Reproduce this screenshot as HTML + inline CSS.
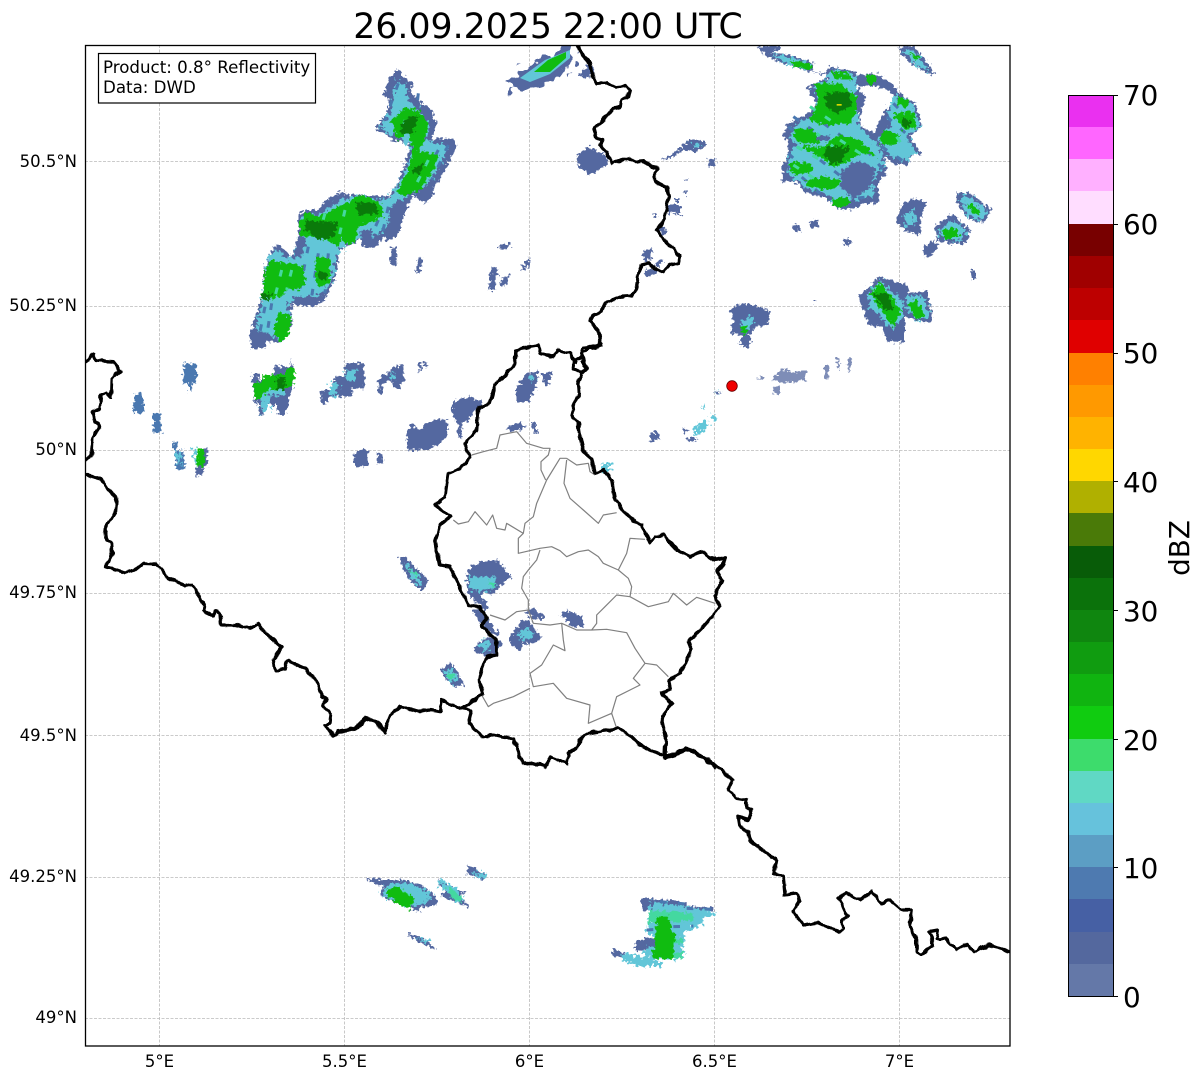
<!DOCTYPE html>
<html><head><meta charset="utf-8"><style>
html,body{margin:0;padding:0;background:#fff}
svg{display:block}
text{font-family:"DejaVu Sans","Liberation Sans",sans-serif;fill:#000}
.b{fill:#5468a0;filter:url(#fz)}.m{fill:#4a78b0;filter:url(#fz)}.t{fill:#62c6d8;filter:url(#ft)}.l{fill:#44d8a0;filter:url(#fz)}.g{fill:#10bc10;filter:url(#fz)}.d{fill:#0a7a0a;filter:url(#fz)}
.c{fill:none;stroke:#000;stroke-width:10;stroke-linejoin:round;stroke-linecap:round;filter:url(#fb)}
.s{fill:none;stroke:#808080;stroke-width:3.6;stroke-linejoin:round}
.st{fill:none;stroke-width:9;stroke-dasharray:20 34}
.tx{font-size:16.5px}.ty{font-size:16.5px;text-anchor:end}.cb{font-size:27.8px}
</style></head><body>
<svg width="1202" height="1081" viewBox="0 0 1202 1081" xmlns="http://www.w3.org/2000/svg">
<defs>
<clipPath id="ax"><rect x="85" y="45" width="925" height="1001"/></clipPath>
<filter id="fz" x="-20%" y="-20%" width="140%" height="140%" color-interpolation-filters="sRGB"><feTurbulence type="fractalNoise" baseFrequency=".1" numOctaves="2" seed="3"/><feDisplacementMap in="SourceGraphic" scale="24" xChannelSelector="R" yChannelSelector="G"/></filter>
<filter id="ft" x="-20%" y="-20%" width="140%" height="140%" color-interpolation-filters="sRGB"><feTurbulence type="fractalNoise" baseFrequency=".09" numOctaves="2" seed="8"/><feDisplacementMap in="SourceGraphic" scale="40" xChannelSelector="R" yChannelSelector="G"/></filter>
<filter id="fb" x="-20%" y="-20%" width="140%" height="140%" color-interpolation-filters="sRGB"><feTurbulence type="fractalNoise" baseFrequency=".05" numOctaves="1" seed="5"/><feDisplacementMap in="SourceGraphic" scale="14" xChannelSelector="R" yChannelSelector="G"/></filter>
</defs>
<rect width="1202" height="1081" fill="#fff"/>
<text x="548" y="38" font-size="34.7" text-anchor="middle">26.09.2025 22:00 UTC</text>
<g stroke="#bbb" stroke-width=".8" stroke-dasharray="3 1.5" fill="none">
<path d="M159.5 45V1046M344.5 45V1046M529.5 45V1046M714.5 45V1046M899.5 45V1046"/>
<path d="M85 161.5H1010M85 306.5H1010M85 450.5H1010M85 593.5H1010M85 735.5H1010M85 877.5H1010M85 1018.5H1010"/>
</g>
<g clip-path="url(#ax)">
<!-- radar NW -->
<g transform="translate(85,40) scale(.33333)">
<path class="b" d="M940 88L965 120 985 130 975 155 1005 185 1040 210 1055 250 1040 300 1100 295 1118 315 1080 390 1045 445 1050 460 1020 492 985 465 960 520 935 590 905 605 900 590 870 625 830 620 825 585 815 610 770 620 760 650 750 720 715 785 680 800 630 795 620 790 620 860 590 905 545 905 540 925 500 925 495 880 510 830 530 780 530 770 540 680 560 635 575 610 620 650 640 590 640 530 660 510 700 510 720 485 765 455 800 465 860 465 910 470 940 425 960 375 975 310 925 300 870 265 905 220 915 185 895 165 915 110Z
M1240 620L1272 608 1275 618 1250 630ZM1305 690L1330 650 1335 665 1320 695ZM1220 680L1240 690 1230 750 1210 750ZM1250 715L1275 705 1260 740 1245 738ZM1000 655L1015 655 1005 700 990 695ZM920 620L935 625 935 675 915 675Z"/>
<path class="t" d="M935 120L965 140 965 170 1000 210 1030 250 1020 300 1090 320 1060 385 1020 440 960 470 920 500 905 560 870 590 830 590 790 610 755 640 740 730 700 770 630 770 610 790 610 860 585 900 555 880 510 870 530 800 535 770 550 650 570 630 620 655 650 590 650 530 700 525 750 480 810 470 900 480 930 450 960 400 985 330 950 300 885 265 920 210Z"/>
<path class="st" stroke="#4a78b0" d="M940 130L900 240M1000 160L985 300M670 620L640 770M700 640L680 770M730 640L720 760M540 800L520 900M560 790L545 890M880 540L850 610M910 500L890 590M1060 330L1000 440M1090 315L1040 420"/>
<path class="g" d="M960 205L1000 210 1030 250 1020 300 1000 330 1060 345 1050 385 1005 450 960 470 935 455 965 400 985 330 970 280 935 300 920 240Z
M830 465L890 490 895 530 820 560 810 610 780 610 770 590 760 620 700 590 650 590 640 555 660 515 700 530 760 500Z
M560 660L655 680 660 730 640 750 610 745 590 770 530 780 540 690ZM695 650L735 655 735 730 700 740 690 700ZM580 815L620 830 610 890 585 905 565 880Z"/>
<path class="st" stroke="#44d8a0" d="M780 510L760 600M720 520L700 590M590 690L570 770M620 690L605 750M960 240L945 290M1030 360L990 440"/>
<path class="d" d="M810 485L870 490 880 520 820 525ZM665 540L760 550 750 590 700 600 660 570ZM700 690L725 700 720 720 700 720ZM530 760L560 760 555 780 530 780ZM970 230L1000 230 985 280 950 285 945 260ZM980 385L1020 370 1000 410Z"/>
<path class="b" d="M900 590L925 500 945 480 955 520 935 590ZM830 570L860 570 855 620 830 620ZM640 590L665 600 650 650 625 650ZM630 770L680 780 675 800 630 795ZM500 880L545 880 540 925 500 925ZM1015 445L1050 450 1020 492 990 470ZM720 490L765 460 760 490 700 520Z"/>
</g>
<!-- top streak -->
<path class="b" d="M505 82L540 58 570 48 578 55 555 80 530 88 510 92Z"/>
<path fill="#62c6d8" d="M520 78L545 60 570 50 570 58 550 74 530 82Z"/>
<path fill="#10bc10" d="M534 72L548 60 566 52 566 58 550 72Z"/>
<!-- row + Lux area -->
<g transform="translate(85,340) scale(.33333)">
<path class="m" d="M295 70L335 72 335 130 320 130 320 155 312 155 312 130 295 130ZM148 160L172 160 177 220 145 220ZM205 220L225 220 230 278 205 278ZM265 305L275 305 275 332 295 332 300 385 275 390 268 340Z"/>
<path class="t" d="M268 335L285 335 290 385 278 360ZM323 325L335 325 335 380 328 370Z"/>
<path class="b" d="M335 375L355 375 355 405 332 410ZM355 322L365 322 370 375 355 378ZM500 102L520 102 520 120 565 120 565 80 590 80 617 80 617 58 622 80 628 130 612 170 612 195 600 222 580 222 575 195 535 195 535 225 525 225 520 180 510 198 505 150Z
M705 150L745 150 750 110 780 108 780 68 838 70 838 145 800 145 800 168 730 170 725 190 710 190Z"/>
<path class="t" d="M530 125L600 120 600 165 555 165 555 205 530 222 525 170ZM735 130L760 130 755 165 735 165ZM780 90L815 90 810 125 785 125Z"/>
<path class="g" d="M335 325L358 325 358 380 335 380ZM505 130L535 125 535 105 570 105 600 100 605 85 628 85 628 130 610 145 570 150 545 150 530 175 508 175Z"/>
<path class="d" d="M575 110L600 115 598 148 572 148Z"/>
</g>
<g transform="translate(340,340) scale(.33333)">
<path class="b" d="M115 115L150 95 160 78 190 78 192 120 180 145 160 145 155 125 130 130 125 165 115 160ZM235 65L245 65 242 95 237 95ZM250 68L262 68 262 80 250 80ZM335 190L360 175 390 170 425 185 425 210 395 215 385 245 365 245 365 295 355 290 350 240 337 230ZM200 285L215 250 240 270 265 245 320 235 325 285 300 310 260 330 205 332ZM40 345L70 325 85 335 85 375 45 385ZM110 335L125 340 130 370 112 370ZM525 150L560 100 595 92 590 135 565 185 530 185ZM605 100L635 95 628 135 615 140ZM495 265L540 245 560 262 520 275ZM575 245L585 245 592 285 585 285Z
M395 675L430 665 470 660 515 710 480 740 455 765 430 755 425 770 445 800 435 810 410 790 385 760 378 710Z
M395 805L420 810 480 885 470 890 430 865 400 820ZM400 925L430 895 460 890 485 910 465 945 430 945 410 940ZM505 900L545 840 570 845 605 895 580 910 550 910 540 935 520 920ZM550 815L580 805 615 830 605 840 570 830ZM660 825L680 812 720 825 735 860 700 860ZM925 285L955 272 960 295 935 305ZM1025 265L1040 265 1045 275 1030 278ZM1035 295L1075 295 1055 308ZM180 655L195 650 225 680 265 725 250 750 230 745 190 690ZM300 990L330 968 345 985 375 1035 345 1040 320 1020Z"/>
<path class="t" d="M150 100L170 100 165 120 150 115ZM565 110L585 100 575 130ZM790 370L810 370 815 385 800 400 785 400ZM1055 262L1090 245 1110 250 1085 280 1065 285ZM1112 230L1125 220 1130 240 1118 248ZM1085 200L1095 200 1090 208ZM1125 158L1140 156 1125 162ZM385 710L430 710 470 710 460 750 420 755 390 750ZM420 905L450 900 445 935 425 935ZM530 880L565 860 585 890 545 900ZM190 665L225 695 250 735 230 735ZM310 995L335 985 355 1020 335 1030Z"/>
<path class="l" d="M445 720L470 730 455 745ZM200 685L235 700 230 710ZM315 1005L345 1000 335 1020Z"/>
</g>
<!-- NE -->
<g transform="translate(540,40) scale(.33333)">
<path class="b" d="M650 18L720 18 720 30 690 38 750 45 820 70 815 90 850 105 870 78 940 95 960 105 1010 100 1050 125 1085 165 1130 195 1145 260 1130 275 1110 290 1145 345 1120 335 1100 380 1060 370 1035 350 1040 400 1015 430 1015 490 975 490 930 510 890 505 860 475 820 465 790 455 780 430 730 420 725 380 745 340 745 300 725 290 745 250 800 225 830 190 800 145 835 125 860 115 855 100 810 95 730 70 680 50Z
M1075 20L1120 18 1165 70 1188 108 1150 95 1085 45ZM1075 520L1090 490 1130 475 1160 490 1145 520 1140 585 1100 575 1070 550ZM1250 455L1290 460 1355 510 1330 550 1285 535 1250 490ZM1185 560L1235 520 1290 570 1280 610 1240 612 1190 600ZM1150 625L1175 600 1195 620 1170 650 1155 650ZM755 555L775 550 785 575 765 575ZM808 545L830 540 838 562 815 565ZM908 600L925 595 935 610 915 618ZM1295 690L1305 690 1305 720 1295 720ZM955 770L1020 710 1100 735 1110 760 1160 750 1178 845 1140 845 1095 830 1095 905 1040 905 1025 860 985 855 970 810ZM570 810L605 790 640 795 690 815 685 850 650 860 630 885 632 905 620 925 598 915 610 885 570 880 580 840ZM370 358L420 325 450 295 495 305 495 320 460 335 430 330 380 360ZM505 358L525 358 530 378 507 378ZM110 345L150 320 200 345 205 370 150 405 115 380ZM120 100L145 72 165 90 150 110 125 115ZM78 102L95 98 85 108ZM432 418L443 418 443 422 432 422ZM430 455L440 455 440 460 430 460ZM435 468L443 468 443 472 435 472ZM405 480L417 480 417 487 405 487ZM380 495L420 495 420 520 385 520ZM338 523L355 523 355 528 338 528ZM418 522L428 522 428 526 418 526ZM355 560L380 565 378 585 358 582ZM310 630L335 625 335 660 310 665ZM350 660L370 658 358 680 345 678ZM310 690L350 685 350 705 318 712ZM825 780L830 780 830 787 825 787ZM525 1056L540 1056 540 1060 525 1060ZM720 420L745 412 745 425 722 428Z"/>
<g opacity=".75"><path class="b" d="M700 1010L730 985 770 1000 800 990 795 1020 730 1030 695 1020ZM650 1015L668 1010 668 1022ZM700 1040L720 1040 720 1060 700 1060ZM855 975L865 975 865 1015 855 1015ZM890 955L898 955 898 990 890 985ZM925 955L932 955 932 995 925 995Z"/></g>
<path class="t" d="M690 40L760 55 815 75 810 88 740 72ZM870 90L940 100 950 130 945 200 965 270 1020 320 1035 370 1000 420 1000 470 950 480 890 490 860 460 800 445 745 400 745 350 770 310 750 290 770 250 820 225 840 180 815 140 860 120ZM1040 160L1120 190 1140 260 1100 290 1130 335 1095 365 1040 340 1015 300 1050 260ZM1090 30L1120 30 1175 100 1130 75ZM1090 520L1120 510 1130 550 1100 560ZM1260 470L1290 470 1345 515 1320 540 1275 520ZM1195 570L1240 540 1280 575 1265 600 1205 595ZM985 760L1020 720 1090 790 1090 830 1060 870 1030 840 990 800ZM1100 770L1150 765 1170 830 1130 845 1100 800ZM600 850L630 825 640 840 615 880ZM450 310L480 310 470 325Z"/>
<path class="st" stroke="#4a78b0" d="M745 260L840 340M760 230L860 300M850 250L950 320M745 340L850 440M745 375L850 470M840 360L930 430M1040 230L1120 300M1060 190L1130 260M1025 320L1100 370M900 480L990 470M980 330L1030 390"/>
<path class="g" d="M825 130L900 130 950 170 950 220 930 250 850 255 810 240 835 180ZM765 265L820 265 840 310 780 310 760 290ZM890 285L960 300 1010 350 960 340 920 370 880 380 840 350 800 330 780 320 850 320ZM750 365L810 370 820 395 770 405 750 395ZM800 420L850 410 900 420 890 445 850 450 800 440ZM870 480L920 470 930 490 900 505 880 495ZM870 95L930 100 935 120 890 115ZM975 105L1005 105 1010 125 985 135ZM750 60L815 72 810 88 760 80ZM1070 170L1110 180 1100 205 1075 195ZM1060 220L1120 215 1130 265 1090 270ZM1030 270L1080 285 1070 315 1020 310ZM1105 35L1140 50 1130 60ZM990 760L1020 725 1085 810 1060 860 1030 820ZM1105 790L1130 775 1155 830 1130 840ZM600 860L625 855 615 885ZM1200 570L1250 565 1260 590 1220 600ZM1285 490L1310 500 1320 525 1295 520Z"/>
<path class="st" stroke="#44d8a0" d="M810 200L900 260M830 280L880 320M900 300L990 360M770 320L860 370M760 375L830 420M1070 290L1090 320"/>
<path class="d" d="M855 160L925 155 935 200 890 220 860 205ZM860 320L930 320 900 370 870 370 850 345ZM1085 235L1115 240 1110 265 1090 260ZM1000 760L1045 760 1060 810 1030 810Z"/>
<path class="b" d="M950 360L1010 385 985 450 940 475 900 440 905 390ZM830 290L870 285 865 300 830 305Z"/>
<path fill="#d8d800" d="M890 192L905 192 905 197 890 197Z"/>
<path style="fill:#fff;filter:url(#fz)" d="M948 138L1000 138 1040 148 1062 172 1048 195 1033 215 1018 245 1000 280 965 258 958 225 968 200 976 170Z"/>
</g>
<!-- south -->
<g transform="translate(340,720) scale(.33333)">
<path class="b" d="M80 475L130 480 150 480 190 480 235 492 275 515 295 545 285 558 245 560 235 575 200 565 125 525 130 500 80 480ZM385 437L435 460 430 482 380 458ZM205 637L240 650 290 685 280 688 235 665 205 645ZM905 535L1040 545 1040 560 1120 562 1120 575 905 572ZM885 665L945 655 945 695 885 690ZM820 690L850 695 845 712 815 705ZM295 480L375 520 360 525 385 560 360 550 310 530 310 515 320 505 295 495Z"/>
<path class="t" d="M145 490L190 490 235 500 275 520 260 550 210 560 125 525ZM295 480L340 500 365 530 360 550 320 525 300 495ZM392 455L435 462 430 482ZM225 650L265 660 260 675ZM850 700L910 710 965 725 965 738 900 738 845 725Z"/>
<path class="t" d="M935 545L1040 560 1120 575 1120 592 1090 595 1090 610 1065 622 1030 640 1030 715 910 715 915 685 945 655 920 635 930 570Z"/>
<path class="l" d="M155 490L210 520 200 540ZM930 570L1060 580 1060 600 925 610ZM1000 655L1030 655 1030 670 1000 670ZM1000 700L1028 695 1028 715 1000 715ZM320 495L365 530 360 548 330 530Z"/>
<path class="st" stroke="#4a78b0" d="M1040 565L1120 568M960 545L1040 552M1000 620L1060 618M920 630L950 628"/>
<path class="g" d="M130 515L175 500 225 540 210 570 170 550ZM950 590L985 590 1005 650 1000 715 935 715 945 655Z"/>
<path class="b" d="M310 515L335 525 330 540 305 530ZM262 540L295 545 285 558 262 552ZM915 655L945 655 945 680 915 680Z"/>
</g>
<!-- borders -->
<g transform="translate(340,340) scale(.33333)">
<path class="s" d="M395 345L430 335 470 325 480 285 530 275 560 310 610 325 630 325 625 345 603 365 603 390 617 420M680 355L660 355 620 420 590 490 580 530 555 550 550 580 535 595 535 640 600 625 635 620 660 632 680 650 715 635 745 630 775 650 790 670 835 690 860 640 870 595 915 598M340 540L355 552 385 545 405 515 440 555 458 525 470 565 495 570 500 550 550 580M680 355L710 375 745 370 750 395 765 405M680 360L672 430 690 475 730 510 775 550 790 525 830 518M600 630L590 660 565 690 550 710 545 745 565 780 565 810 530 815 495 840 450 825M835 690L865 715 875 740 870 770 830 765 795 800 770 825 770 850 755 870M870 770L925 800 985 785 1000 760 1040 795 1070 772 1125 790M565 810L580 850 630 855 665 850 710 870 755 870 800 868 860 878 885 925 915 970 950 975 985 1010M665 850L670 900 675 932 640 915 605 975 570 1000 580 1040 640 1030 680 1075 750 1095 745 1150 815 1120 830 1165M915 970L880 1015 900 1035 830 1070 815 1120M570 1045L520 1070 460 1090 445 1100 425 1065"/>
<path class="c" d="M780 10L740 25 725 40 735 70 740 85 725 100 715 130 718 160 700 200 695 225 715 250 720 290 730 335 755 355 765 400 790 390 815 420 825 480 870 535 905 555 930 610 945 590 970 585 1010 630 1050 650 1085 635 1125 660 1155 655 1150 675 1130 690 1145 720 1125 770 1140 800 1125 820 1090 860 1045 905 1055 930 1020 1000 985 1025 990 1050 965 1060 995 1090 965 1130 978 1190 975 1250"/>
<path class="c" d="M705 65L690 40 655 30 640 50 600 40 595 15 530 30 520 80 465 135 450 190 415 205 410 270 375 310 390 355 360 385 325 400 315 470 285 495 330 530 300 555 285 600 300 675 330 680 385 795 420 800 440 835 425 860 470 900 470 945 440 950 415 1020 430 1060 365 1105"/>
<path class="c" d="M0 1175L45 1165 75 1135 110 1145 135 1175 150 1125 180 1100 240 1115 270 1110 300 1115 305 1080 360 1105 395 1110 385 1150 430 1190 465 1185 520 1195 540 1250 550 1270 600 1272 615 1280 635 1250 680 1272 685 1240 710 1225 720 1200 745 1180 835 1165 875 1190 900 1215 975 1250 1030 1235 1040 1225 1085 1250 1125 1280"/>
</g>
<g transform="translate(540,40) scale(.33333)">
<path class="c" d="M115 18L130 48 150 70 158 105 170 130 200 128 230 142 258 138 268 150 262 170 245 182 242 200 220 205 190 240 162 265 170 295 188 300 180 315 200 335 215 370 240 362 265 355 285 365 310 362 335 380 355 385 345 400 345 425 380 442 385 470 380 500 375 520 368 550 348 572 368 590 380 610 405 628 420 650 415 670 390 675 370 695 345 685 325 670 305 675 295 700 290 740 275 768 240 770 205 785 190 800 185 815 160 825 150 845 175 870 182 915 165 920 130 925 125 950 105 965 97 990 125 995 140 985 125 965"/>
</g>
<g transform="translate(85,340) scale(.33333)">
<path class="c" d="M0 70L25 40 35 62 85 65 107 92 80 115 78 172 65 158 48 165 45 205 22 215 30 245 45 258 22 295 20 345 0 360"/>
<path class="c" d="M0 404L50 418 70 448 95 475 92 515 60 565 65 600 80 610 82 640 62 680 80 685 120 698 150 690 175 670 215 672 245 710 300 738 322 733 360 800 358 815 385 828 390 812 405 820 408 855 450 855 495 865 520 850 540 878 590 922 565 960 572 993 600 985 607 962 660 985 700 1030 710 1068 725 1075 712 1098 738 1125 735 1150 718 1155 735 1170 745 1190 760 1175 790 1172 830 1155 840 1137 875 1147 900 1178"/>
</g>
<g transform="translate(650,720) scale(.33333)">
<path class="c" d="M45 115L70 105 108 85 150 105 190 130 250 182 235 205 260 235 290 240 290 265 305 270 295 300 265 290 270 320 295 335 300 360 370 415 380 420 372 460 400 470 405 525 440 520 448 545 428 575 460 615 505 608 565 635 580 625 575 600 595 590 580 565 565 535 590 518 630 540 665 515 695 550 720 540 755 570 785 570 780 620 800 660 800 695 815 705 850 675 838 635 865 630 860 655 885 655 920 690 950 672 970 695 1015 675 1065 690 1080 695"/>
</g>
</g>
<circle cx="732" cy="386" r="5.3" fill="#f00000" stroke="#600" stroke-width=".8"/>
<rect x="85.5" y="45.5" width="924.5" height="1000.5" fill="none" stroke="#000" stroke-width="1.3"/>
<rect x="98.5" y="53.5" width="217" height="49.5" fill="#fff" stroke="#000" stroke-width="1.2"/>
<text x="103" y="73" font-size="16.67">Product: 0.8° Reflectivity</text>
<text x="103" y="93" font-size="16.67">Data: DWD</text>
<g class="tx" text-anchor="middle">
<text x="159.5" y="1067" class="tx">5°E</text><text x="344.5" y="1067" class="tx">5.5°E</text><text x="529.5" y="1067" class="tx">6°E</text><text x="714.5" y="1067" class="tx">6.5°E</text><text x="899.5" y="1067" class="tx">7°E</text>
</g>
<text x="77" y="167" class="ty">50.5°N</text><text x="77" y="311" class="ty">50.25°N</text><text x="77" y="455" class="ty">50°N</text><text x="77" y="598" class="ty">49.75°N</text><text x="77" y="741" class="ty">49.5°N</text><text x="77" y="882" class="ty">49.25°N</text><text x="77" y="1023" class="ty">49°N</text>
<!-- colorbar -->
<g shape-rendering="crispEdges">
<rect x="1068" y="95" width="45" height="33" fill="#ea30f0"/>
<rect x="1068" y="127" width="45" height="33" fill="#ff66ff"/>
<rect x="1068" y="159" width="45" height="33" fill="#ffb0ff"/>
<rect x="1068" y="191" width="45" height="33" fill="#ffddff"/>
<rect x="1068" y="224" width="45" height="33" fill="#780000"/>
<rect x="1068" y="256" width="45" height="33" fill="#a00000"/>
<rect x="1068" y="288" width="45" height="33" fill="#bd0000"/>
<rect x="1068" y="320" width="45" height="33" fill="#e00000"/>
<rect x="1068" y="353" width="45" height="33" fill="#ff8000"/>
<rect x="1068" y="385" width="45" height="33" fill="#ff9900"/>
<rect x="1068" y="417" width="45" height="33" fill="#ffb300"/>
<rect x="1068" y="449" width="45" height="33" fill="#ffd700"/>
<rect x="1068" y="481" width="45" height="33" fill="#b0b000"/>
<rect x="1068" y="513" width="45" height="34" fill="#4a7a08"/>
<rect x="1068" y="546" width="45" height="33" fill="#085c08"/>
<rect x="1068" y="578" width="45" height="33" fill="#0b720b"/>
<rect x="1068" y="610" width="45" height="33" fill="#0f860f"/>
<rect x="1068" y="642" width="45" height="33" fill="#109c10"/>
<rect x="1068" y="674" width="45" height="33" fill="#10b410"/>
<rect x="1068" y="706" width="45" height="33" fill="#10cc10"/>
<rect x="1068" y="739" width="45" height="33" fill="#3ddc6c"/>
<rect x="1068" y="771" width="45" height="33" fill="#60d8c4"/>
<rect x="1068" y="803" width="45" height="33" fill="#66c2dc"/>
<rect x="1068" y="835" width="45" height="33" fill="#5c9ec4"/>
<rect x="1068" y="867" width="45" height="33" fill="#4e7ab0"/>
<rect x="1068" y="899" width="45" height="33" fill="#4660a4"/>
<rect x="1068" y="932" width="45" height="32" fill="#54689e"/>
<rect x="1068" y="964" width="45" height="32" fill="#6478a8"/>
</g>
<rect x="1068.5" y="95.5" width="45" height="901" fill="none" stroke="#000" stroke-width="1"/>
<path d="M1113 95.5h5M1113 224.5h5M1113 353.5h5M1113 481.5h5M1113 610.5h5M1113 739.5h5M1113 867.5h5M1113 996.5h5" stroke="#000" stroke-width="1"/>
<text x="1123" y="105" class="cb">70</text><text x="1123" y="234" class="cb">60</text><text x="1123" y="363" class="cb">50</text><text x="1123" y="492" class="cb">40</text><text x="1123" y="621" class="cb">30</text><text x="1123" y="750" class="cb">20</text><text x="1123" y="878" class="cb">10</text><text x="1123" y="1007" class="cb">0</text>
<text transform="translate(1189,548) rotate(-90)" class="cb" text-anchor="middle">dBZ</text>
</svg>
</body></html>
